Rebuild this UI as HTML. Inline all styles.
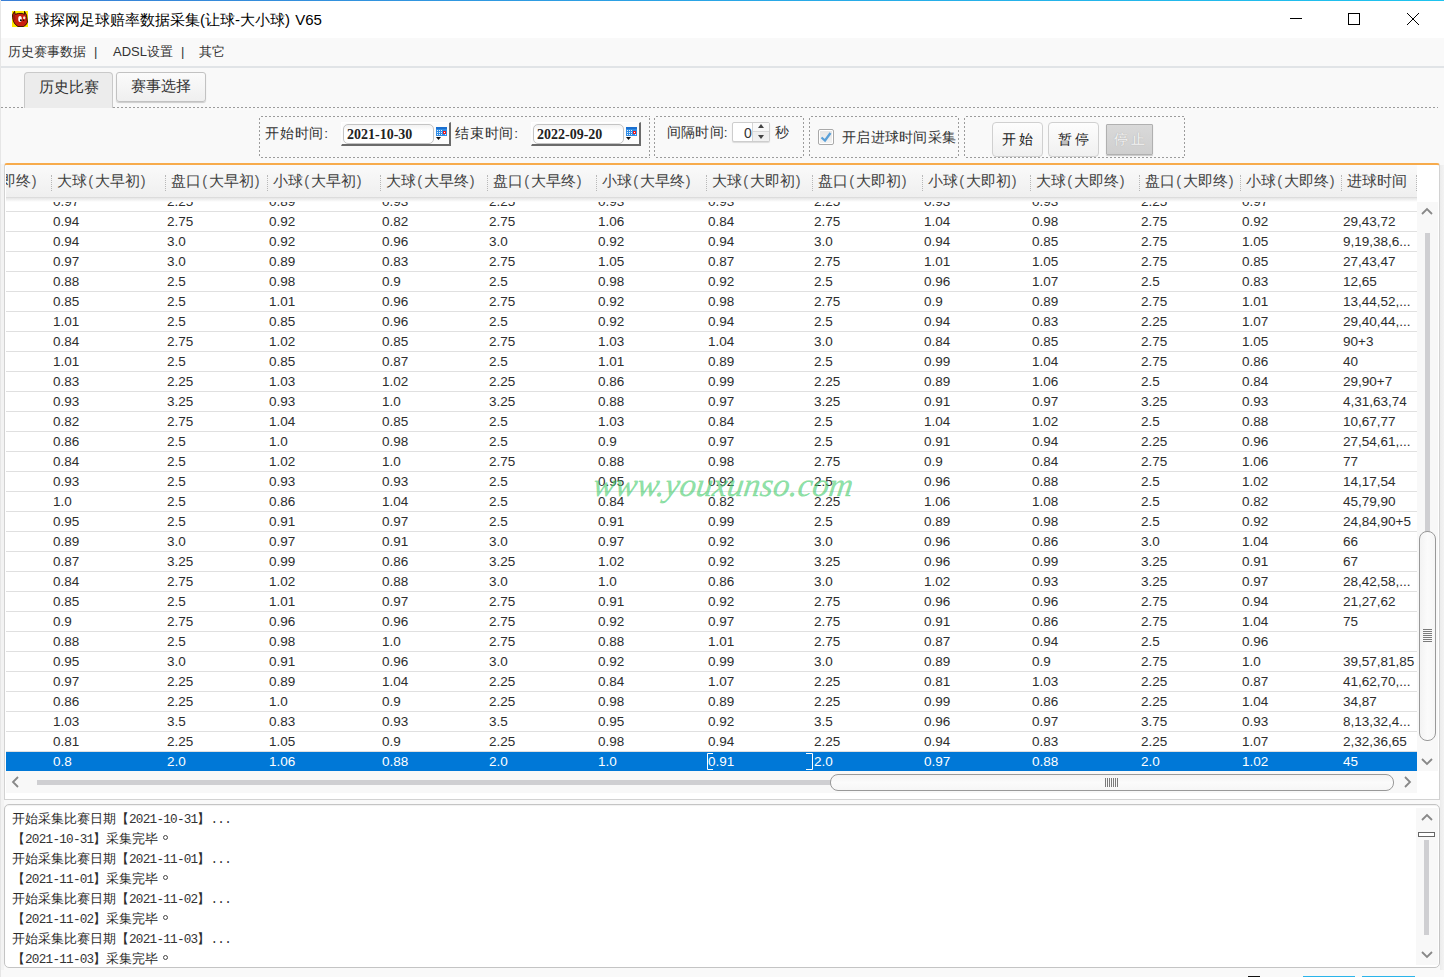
<!DOCTYPE html>
<html><head><meta charset="utf-8">
<style>
*{box-sizing:border-box;}
html,body{margin:0;padding:0;}
body{width:1444px;height:977px;overflow:hidden;position:relative;background:#f9f9f9;font-family:"Liberation Sans",sans-serif;color:#333;}
.abs{position:absolute;}
#topline{left:0;top:0;width:1444px;height:1px;background:linear-gradient(90deg,#3a7fd6,#2aa6e6 50%,#1ec3ee);}
#leftb{left:0;top:0;width:1px;height:977px;background:#e6e6e6;}
#title{left:1px;top:1px;width:1443px;height:37px;background:#fff;}
#title .t{position:absolute;left:34px;top:9px;font-size:15px;line-height:20px;color:#000;white-space:nowrap;word-spacing:1px;}
#menu{left:1px;top:38px;width:1443px;height:30px;background:#f9f9f9;border-bottom:2px solid #e1e4e7;}
#menu span{position:absolute;top:5px;font-size:13px;line-height:18px;color:#333;white-space:nowrap;}
.tab{position:absolute;font-size:15px;line-height:20px;color:#333;text-align:center;}
#tab1{left:24px;top:72px;width:89px;height:36px;background:#ececec;border:1px solid #c9c9c9;border-bottom:none;border-radius:4px 4px 0 0;padding-top:4px;z-index:2;}
#tab2{left:116px;top:72px;width:90px;height:30px;background:linear-gradient(#fbfbfb,#efefef);border:1px solid #c2c2c2;border-radius:3px;padding-top:3px;box-shadow:0 1px 1px rgba(0,0,0,.18);}
#dash1{left:1px;top:107px;width:1437px;height:1px;background:repeating-linear-gradient(90deg,#9c9c9c 0 2px,transparent 2px 4px);}
.grp{position:absolute;background:linear-gradient(90deg,#9c9c9c 50%,transparent 50%) 2px 0/4px 1px repeat-x,linear-gradient(90deg,#9c9c9c 50%,transparent 50%) 2px 100%/4px 1px repeat-x,linear-gradient(#9c9c9c 50%,transparent 50%) 0 2px/1px 4px repeat-y,linear-gradient(#9c9c9c 50%,transparent 50%) 100% 2px/1px 4px repeat-y;}
.lbl{position:absolute;font-size:13.5px;line-height:18px;color:#333;white-space:nowrap;letter-spacing:0.8px;}
.datebox{position:absolute;width:110px;height:23px;background:#fcfcfc;border-top:1px solid #fff;border-left:1px solid #fff;border-right:2px solid #6b6b6b;border-bottom:2px solid #6b6b6b;}
.datebox .f{position:absolute;left:1px;top:1px;width:91px;height:20px;background:linear-gradient(#f2f2f2,#fff 30%);border:1px solid #c4c4c4;border-radius:5px;font-family:"Liberation Serif",serif;font-weight:bold;font-size:14px;line-height:19px;padding-left:3px;color:#222;}
.cal{position:absolute;left:94px;top:4px;}
.btn{position:absolute;height:35px;border:1px solid #d0d0d0;border-radius:4px;background:linear-gradient(#fdfdfd,#f0f0f0);font-size:13.5px;line-height:33px;text-align:center;color:#222;letter-spacing:3.5px;padding-left:3.5px;}
#grid{left:4px;top:163px;width:1436px;height:637px;background:#fff;border:1px solid #d2d2d2;border-top:2px solid #f7ab4c;border-radius:3px 3px 0 0;overflow:hidden;}
#gin{position:absolute;left:1px;top:0px;width:1411px;height:606px;overflow:hidden;}
.row{position:absolute;left:0;width:1411px;height:20px;border-bottom:1px solid #e0e0e0;font-size:13.5px;line-height:20px;color:#2e2e2e;}
.row span{position:absolute;top:0;white-space:nowrap;}
.row.sel{background:#0078d7;color:#fff;border-bottom:none;height:19px;line-height:19px;}
#hdr{position:absolute;left:0;top:0;width:1411px;height:33px;background:linear-gradient(#fafafa,#efefef);border-bottom:1px solid #dcdcdc;}
#hsh{position:absolute;left:0;top:33px;width:1411px;height:4px;background:linear-gradient(#e6e6e6,#fff);}
#hdr .h{position:absolute;top:7px;font-size:14.5px;line-height:18px;color:#404040;white-space:nowrap;}
#hdr .h i{display:inline-block;width:7.5px;text-align:center;font-style:normal;color:#555;}
#hdr .sep{position:absolute;top:10px;width:1px;height:16px;border-left:1px dotted #b8b8b8;}
#vs{position:absolute;left:1412px;top:37px;width:21px;height:569px;background:#f8f8f8;}
.chev{position:absolute;}
#hs{position:absolute;left:1px;top:606px;width:1411px;height:22px;background:#f8f8f8;}
#log{left:4px;top:804px;width:1436px;height:164px;background:#fff;border:1px solid #c4c4c4;border-radius:5px;box-shadow:inset 0 1px 1px rgba(0,0,0,.06);}
#logt{position:absolute;left:7px;top:4px;font-size:12.8px;line-height:20px;color:#2a2a2a;}
#logt div{white-space:nowrap;height:20px;}
#logt .o{display:inline-block;width:13px;height:9px;position:relative;}
#logt .o:after{content:"";position:absolute;left:5px;top:1px;width:5px;height:5px;box-sizing:border-box;border:1px solid #444;border-radius:50%;}
#logt b{font-weight:normal;color:#333;font-family:"Liberation Mono",monospace;font-size:12.7px;letter-spacing:-0.77px;}
#wm{left:591px;top:467px;font-family:"Liberation Serif",serif;font-style:italic;font-size:33px;-webkit-text-stroke:0.3px rgba(70,205,110,.6);transform:skewX(-8deg);transform-origin:0 100%;line-height:36px;color:rgba(70,205,110,.62);white-space:nowrap;}
</style></head><body>
<div id="topline" class="abs"></div>
<div id="title" class="abs">
  <svg style="position:absolute;left:11px;top:10px" width="16" height="16" viewBox="0 0 16 16">
    <rect x="0" y="0" width="16" height="16" fill="#ffe800"/>
    <path d="M0.6 3.5 L2.6 0.3 L3.2 3.3 Q6.5 2 10.2 2.4 L12.4 3.4 L12.5 0.3 L14.6 4.2 L15.5 11.2 Q14.2 14.4 11.4 15.6 L6 15.6 Q2.6 13.6 1.5 10.5 L0.6 6.5 Z" fill="#c8200f" stroke="#220500" stroke-width="0.9"/>
    <path d="M1 3.8 L3 3.5 L3.5 9 L1.4 9.5 Z" fill="#9a1a0c"/>
    <ellipse cx="8" cy="8" rx="1.8" ry="2.9" fill="#fff"/>
    <circle cx="8.9" cy="9.3" r="1" fill="#000"/>
    <ellipse cx="12.2" cy="6.8" rx="1.2" ry="1.5" fill="#f6e2cc"/>
    <circle cx="11.6" cy="9.3" r="0.8" fill="#3a0800"/>
  </svg>
  <div class="t">球探网足球赔率数据采集(让球-大小球) V65</div>
  <svg style="position:absolute;left:1288px;top:12px" width="134" height="16" viewBox="0 0 134 16">
    <path d="M1 5.5 H13" stroke="#000" stroke-width="1"/>
    <rect x="59.5" y="0.5" width="11" height="11" fill="none" stroke="#000" stroke-width="1"/>
    <path d="M118 0 L130 12 M130 0 L118 12" stroke="#000" stroke-width="1"/>
  </svg>
</div>
<div id="leftb" class="abs"></div>
<div id="menu" class="abs">
  <span style="left:7px">历史赛事数据</span>
  <span style="left:93px">|</span>
  <span style="left:112px">ADSL设置</span>
  <span style="left:180px">|</span>
  <span style="left:198px">其它</span>
</div>
<div class="tab" id="tab1">历史比赛</div>
<div class="tab" id="tab2">赛事选择</div>
<div id="dash1" class="abs"></div>

<div class="grp" style="left:259px;top:116px;width:391px;height:42px;"></div>
<div class="lbl" style="left:265px;top:125px">开始时间:</div>
<div class="datebox" style="left:341px;top:122px;height:24px"><div class="f">2021-10-30</div><svg class="cal" width="12" height="14" viewBox="0 0 12 14"><rect x="0" y="0" width="11" height="9" fill="#2f8ce6"/><rect x="0" y="0" width="11" height="2" fill="#1a6fd0"/><g fill="#e8f2ff"><rect x="1" y="3" width="1" height="1"/><rect x="3" y="3" width="1" height="1"/><rect x="5" y="3" width="1" height="1"/><rect x="1" y="5" width="1" height="1"/><rect x="3" y="5" width="1" height="1"/><rect x="5" y="5" width="1" height="1"/><rect x="1" y="7" width="1" height="1"/><rect x="3" y="7" width="1" height="1"/><rect x="5" y="7" width="1" height="1"/><rect x="9" y="7" width="1" height="1"/></g><rect x="7" y="4" width="3" height="3" fill="#f01818"/><rect x="8" y="5" width="1" height="1" fill="#fff"/><path d="M0 10 H5 L2.5 13 Z" fill="#111"/></svg></div>
<div class="lbl" style="left:455px;top:125px">结束时间:</div>
<div class="datebox" style="left:531px;top:122px;height:24px"><div class="f">2022-09-20</div><svg class="cal" width="12" height="14" viewBox="0 0 12 14"><rect x="0" y="0" width="11" height="9" fill="#2f8ce6"/><rect x="0" y="0" width="11" height="2" fill="#1a6fd0"/><g fill="#e8f2ff"><rect x="1" y="3" width="1" height="1"/><rect x="3" y="3" width="1" height="1"/><rect x="5" y="3" width="1" height="1"/><rect x="1" y="5" width="1" height="1"/><rect x="3" y="5" width="1" height="1"/><rect x="5" y="5" width="1" height="1"/><rect x="1" y="7" width="1" height="1"/><rect x="3" y="7" width="1" height="1"/><rect x="5" y="7" width="1" height="1"/><rect x="9" y="7" width="1" height="1"/></g><rect x="7" y="4" width="3" height="3" fill="#f01818"/><rect x="8" y="5" width="1" height="1" fill="#fff"/><path d="M0 10 H5 L2.5 13 Z" fill="#111"/></svg></div>

<div class="grp" style="left:654px;top:116px;width:150px;height:42px;"></div>
<div class="lbl" style="left:667px;top:124px;letter-spacing:0.2px">间隔时间:</div>
<div class="abs" style="left:732px;top:122px;width:38px;height:20px;background:#fff;border:1px solid #cdcdcd;border-radius:2px;box-shadow:0 1px 1px rgba(0,0,0,.12);">
  <div style="position:absolute;left:11px;top:1px;font-size:14px;line-height:18px;color:#333">0</div>
  <div style="position:absolute;left:19px;top:0;width:17px;height:18px;border-left:1px solid #d4d4d4;background:linear-gradient(#fbfbfb,#f7f7f7 45%,#eeeeee 55%,#f2f2f2)"></div>
  <div style="position:absolute;left:20px;top:8px;width:16px;height:1px;background:#d8d8d8"></div>
  <div style="position:absolute;left:25px;top:1px;border-left:3px solid transparent;border-right:3px solid transparent;border-bottom:4px solid #444"></div>
  <div style="position:absolute;left:25px;top:12px;border-left:3px solid transparent;border-right:3px solid transparent;border-top:4px solid #444"></div>
</div>
<div class="lbl" style="left:775px;top:124px">秒</div>

<div class="grp" style="left:809px;top:116px;width:150px;height:42px;"></div>
<div class="abs" style="left:818px;top:129px;width:16px;height:16px;background:#fff;border:1px solid #a9a9a9;border-radius:2px;"><div style="position:absolute;left:1px;top:1px;width:12px;height:12px;background:linear-gradient(#e6e6e6,#f3f3f3)"></div>
  <svg width="14" height="14" viewBox="0 0 14 14" style="position:absolute;left:0;top:0"><path d="M2.5 7.5 L6 10.5 L11.5 3" fill="none" stroke="#5aa0d8" stroke-width="2.3"/></svg>
</div>
<div class="lbl" style="left:842px;top:129px;letter-spacing:0.3px">开启进球时间采集</div>

<div class="grp" style="left:964px;top:116px;width:221px;height:42px;"></div>
<div class="btn" style="left:992px;top:122px;width:51px;">开始</div>
<div class="btn" style="left:1048px;top:122px;width:51px;">暂停</div>
<div class="btn" style="left:1106px;top:124px;width:47px;height:31px;line-height:29px;background:linear-gradient(#d9d9d9,#cfcfcf);border-color:#b0b0b0;border-radius:1px;color:#f6f6f6;text-shadow:0 0 1px rgba(120,120,120,.6);box-shadow:0 1px 1px rgba(0,0,0,.2)">停止</div>

<div id="grid" class="abs">
  <div id="gin">
<div class="row" style="top:27px"><span style="left:47px">0.97</span><span style="left:161px">2.25</span><span style="left:263px">0.89</span><span style="left:376px">0.93</span><span style="left:483px">2.25</span><span style="left:592px">0.93</span><span style="left:702px">0.93</span><span style="left:808px">2.25</span><span style="left:918px">0.93</span><span style="left:1026px">0.93</span><span style="left:1135px">2.25</span><span style="left:1236px">0.97</span></div>
<div class="row" style="top:47px"><span style="left:47px">0.94</span><span style="left:161px">2.75</span><span style="left:263px">0.92</span><span style="left:376px">0.82</span><span style="left:483px">2.75</span><span style="left:592px">1.06</span><span style="left:702px">0.84</span><span style="left:808px">2.75</span><span style="left:918px">1.04</span><span style="left:1026px">0.98</span><span style="left:1135px">2.75</span><span style="left:1236px">0.92</span><span style="left:1337px">29,43,72</span></div>
<div class="row" style="top:67px"><span style="left:47px">0.94</span><span style="left:161px">3.0</span><span style="left:263px">0.92</span><span style="left:376px">0.96</span><span style="left:483px">3.0</span><span style="left:592px">0.92</span><span style="left:702px">0.94</span><span style="left:808px">3.0</span><span style="left:918px">0.94</span><span style="left:1026px">0.85</span><span style="left:1135px">2.75</span><span style="left:1236px">1.05</span><span style="left:1337px">9,19,38,6...</span></div>
<div class="row" style="top:87px"><span style="left:47px">0.97</span><span style="left:161px">3.0</span><span style="left:263px">0.89</span><span style="left:376px">0.83</span><span style="left:483px">2.75</span><span style="left:592px">1.05</span><span style="left:702px">0.87</span><span style="left:808px">2.75</span><span style="left:918px">1.01</span><span style="left:1026px">1.05</span><span style="left:1135px">2.75</span><span style="left:1236px">0.85</span><span style="left:1337px">27,43,47</span></div>
<div class="row" style="top:107px"><span style="left:47px">0.88</span><span style="left:161px">2.5</span><span style="left:263px">0.98</span><span style="left:376px">0.9</span><span style="left:483px">2.5</span><span style="left:592px">0.98</span><span style="left:702px">0.92</span><span style="left:808px">2.5</span><span style="left:918px">0.96</span><span style="left:1026px">1.07</span><span style="left:1135px">2.5</span><span style="left:1236px">0.83</span><span style="left:1337px">12,65</span></div>
<div class="row" style="top:127px"><span style="left:47px">0.85</span><span style="left:161px">2.5</span><span style="left:263px">1.01</span><span style="left:376px">0.96</span><span style="left:483px">2.75</span><span style="left:592px">0.92</span><span style="left:702px">0.98</span><span style="left:808px">2.75</span><span style="left:918px">0.9</span><span style="left:1026px">0.89</span><span style="left:1135px">2.75</span><span style="left:1236px">1.01</span><span style="left:1337px">13,44,52,...</span></div>
<div class="row" style="top:147px"><span style="left:47px">1.01</span><span style="left:161px">2.5</span><span style="left:263px">0.85</span><span style="left:376px">0.96</span><span style="left:483px">2.5</span><span style="left:592px">0.92</span><span style="left:702px">0.94</span><span style="left:808px">2.5</span><span style="left:918px">0.94</span><span style="left:1026px">0.83</span><span style="left:1135px">2.25</span><span style="left:1236px">1.07</span><span style="left:1337px">29,40,44,...</span></div>
<div class="row" style="top:167px"><span style="left:47px">0.84</span><span style="left:161px">2.75</span><span style="left:263px">1.02</span><span style="left:376px">0.85</span><span style="left:483px">2.75</span><span style="left:592px">1.03</span><span style="left:702px">1.04</span><span style="left:808px">3.0</span><span style="left:918px">0.84</span><span style="left:1026px">0.85</span><span style="left:1135px">2.75</span><span style="left:1236px">1.05</span><span style="left:1337px">90+3</span></div>
<div class="row" style="top:187px"><span style="left:47px">1.01</span><span style="left:161px">2.5</span><span style="left:263px">0.85</span><span style="left:376px">0.87</span><span style="left:483px">2.5</span><span style="left:592px">1.01</span><span style="left:702px">0.89</span><span style="left:808px">2.5</span><span style="left:918px">0.99</span><span style="left:1026px">1.04</span><span style="left:1135px">2.75</span><span style="left:1236px">0.86</span><span style="left:1337px">40</span></div>
<div class="row" style="top:207px"><span style="left:47px">0.83</span><span style="left:161px">2.25</span><span style="left:263px">1.03</span><span style="left:376px">1.02</span><span style="left:483px">2.25</span><span style="left:592px">0.86</span><span style="left:702px">0.99</span><span style="left:808px">2.25</span><span style="left:918px">0.89</span><span style="left:1026px">1.06</span><span style="left:1135px">2.5</span><span style="left:1236px">0.84</span><span style="left:1337px">29,90+7</span></div>
<div class="row" style="top:227px"><span style="left:47px">0.93</span><span style="left:161px">3.25</span><span style="left:263px">0.93</span><span style="left:376px">1.0</span><span style="left:483px">3.25</span><span style="left:592px">0.88</span><span style="left:702px">0.97</span><span style="left:808px">3.25</span><span style="left:918px">0.91</span><span style="left:1026px">0.97</span><span style="left:1135px">3.25</span><span style="left:1236px">0.93</span><span style="left:1337px">4,31,63,74</span></div>
<div class="row" style="top:247px"><span style="left:47px">0.82</span><span style="left:161px">2.75</span><span style="left:263px">1.04</span><span style="left:376px">0.85</span><span style="left:483px">2.5</span><span style="left:592px">1.03</span><span style="left:702px">0.84</span><span style="left:808px">2.5</span><span style="left:918px">1.04</span><span style="left:1026px">1.02</span><span style="left:1135px">2.5</span><span style="left:1236px">0.88</span><span style="left:1337px">10,67,77</span></div>
<div class="row" style="top:267px"><span style="left:47px">0.86</span><span style="left:161px">2.5</span><span style="left:263px">1.0</span><span style="left:376px">0.98</span><span style="left:483px">2.5</span><span style="left:592px">0.9</span><span style="left:702px">0.97</span><span style="left:808px">2.5</span><span style="left:918px">0.91</span><span style="left:1026px">0.94</span><span style="left:1135px">2.25</span><span style="left:1236px">0.96</span><span style="left:1337px">27,54,61,...</span></div>
<div class="row" style="top:287px"><span style="left:47px">0.84</span><span style="left:161px">2.5</span><span style="left:263px">1.02</span><span style="left:376px">1.0</span><span style="left:483px">2.75</span><span style="left:592px">0.88</span><span style="left:702px">0.98</span><span style="left:808px">2.75</span><span style="left:918px">0.9</span><span style="left:1026px">0.84</span><span style="left:1135px">2.75</span><span style="left:1236px">1.06</span><span style="left:1337px">77</span></div>
<div class="row" style="top:307px"><span style="left:47px">0.93</span><span style="left:161px">2.5</span><span style="left:263px">0.93</span><span style="left:376px">0.93</span><span style="left:483px">2.5</span><span style="left:592px">0.95</span><span style="left:702px">0.92</span><span style="left:808px">2.5</span><span style="left:918px">0.96</span><span style="left:1026px">0.88</span><span style="left:1135px">2.5</span><span style="left:1236px">1.02</span><span style="left:1337px">14,17,54</span></div>
<div class="row" style="top:327px"><span style="left:47px">1.0</span><span style="left:161px">2.5</span><span style="left:263px">0.86</span><span style="left:376px">1.04</span><span style="left:483px">2.5</span><span style="left:592px">0.84</span><span style="left:702px">0.82</span><span style="left:808px">2.25</span><span style="left:918px">1.06</span><span style="left:1026px">1.08</span><span style="left:1135px">2.5</span><span style="left:1236px">0.82</span><span style="left:1337px">45,79,90</span></div>
<div class="row" style="top:347px"><span style="left:47px">0.95</span><span style="left:161px">2.5</span><span style="left:263px">0.91</span><span style="left:376px">0.97</span><span style="left:483px">2.5</span><span style="left:592px">0.91</span><span style="left:702px">0.99</span><span style="left:808px">2.5</span><span style="left:918px">0.89</span><span style="left:1026px">0.98</span><span style="left:1135px">2.5</span><span style="left:1236px">0.92</span><span style="left:1337px">24,84,90+5</span></div>
<div class="row" style="top:367px"><span style="left:47px">0.89</span><span style="left:161px">3.0</span><span style="left:263px">0.97</span><span style="left:376px">0.91</span><span style="left:483px">3.0</span><span style="left:592px">0.97</span><span style="left:702px">0.92</span><span style="left:808px">3.0</span><span style="left:918px">0.96</span><span style="left:1026px">0.86</span><span style="left:1135px">3.0</span><span style="left:1236px">1.04</span><span style="left:1337px">66</span></div>
<div class="row" style="top:387px"><span style="left:47px">0.87</span><span style="left:161px">3.25</span><span style="left:263px">0.99</span><span style="left:376px">0.86</span><span style="left:483px">3.25</span><span style="left:592px">1.02</span><span style="left:702px">0.92</span><span style="left:808px">3.25</span><span style="left:918px">0.96</span><span style="left:1026px">0.99</span><span style="left:1135px">3.25</span><span style="left:1236px">0.91</span><span style="left:1337px">67</span></div>
<div class="row" style="top:407px"><span style="left:47px">0.84</span><span style="left:161px">2.75</span><span style="left:263px">1.02</span><span style="left:376px">0.88</span><span style="left:483px">3.0</span><span style="left:592px">1.0</span><span style="left:702px">0.86</span><span style="left:808px">3.0</span><span style="left:918px">1.02</span><span style="left:1026px">0.93</span><span style="left:1135px">3.25</span><span style="left:1236px">0.97</span><span style="left:1337px">28,42,58,...</span></div>
<div class="row" style="top:427px"><span style="left:47px">0.85</span><span style="left:161px">2.5</span><span style="left:263px">1.01</span><span style="left:376px">0.97</span><span style="left:483px">2.75</span><span style="left:592px">0.91</span><span style="left:702px">0.92</span><span style="left:808px">2.75</span><span style="left:918px">0.96</span><span style="left:1026px">0.96</span><span style="left:1135px">2.75</span><span style="left:1236px">0.94</span><span style="left:1337px">21,27,62</span></div>
<div class="row" style="top:447px"><span style="left:47px">0.9</span><span style="left:161px">2.75</span><span style="left:263px">0.96</span><span style="left:376px">0.96</span><span style="left:483px">2.75</span><span style="left:592px">0.92</span><span style="left:702px">0.97</span><span style="left:808px">2.75</span><span style="left:918px">0.91</span><span style="left:1026px">0.86</span><span style="left:1135px">2.75</span><span style="left:1236px">1.04</span><span style="left:1337px">75</span></div>
<div class="row" style="top:467px"><span style="left:47px">0.88</span><span style="left:161px">2.5</span><span style="left:263px">0.98</span><span style="left:376px">1.0</span><span style="left:483px">2.75</span><span style="left:592px">0.88</span><span style="left:702px">1.01</span><span style="left:808px">2.75</span><span style="left:918px">0.87</span><span style="left:1026px">0.94</span><span style="left:1135px">2.5</span><span style="left:1236px">0.96</span></div>
<div class="row" style="top:487px"><span style="left:47px">0.95</span><span style="left:161px">3.0</span><span style="left:263px">0.91</span><span style="left:376px">0.96</span><span style="left:483px">3.0</span><span style="left:592px">0.92</span><span style="left:702px">0.99</span><span style="left:808px">3.0</span><span style="left:918px">0.89</span><span style="left:1026px">0.9</span><span style="left:1135px">2.75</span><span style="left:1236px">1.0</span><span style="left:1337px">39,57,81,85</span></div>
<div class="row" style="top:507px"><span style="left:47px">0.97</span><span style="left:161px">2.25</span><span style="left:263px">0.89</span><span style="left:376px">1.04</span><span style="left:483px">2.25</span><span style="left:592px">0.84</span><span style="left:702px">1.07</span><span style="left:808px">2.25</span><span style="left:918px">0.81</span><span style="left:1026px">1.03</span><span style="left:1135px">2.25</span><span style="left:1236px">0.87</span><span style="left:1337px">41,62,70,...</span></div>
<div class="row" style="top:527px"><span style="left:47px">0.86</span><span style="left:161px">2.25</span><span style="left:263px">1.0</span><span style="left:376px">0.9</span><span style="left:483px">2.25</span><span style="left:592px">0.98</span><span style="left:702px">0.89</span><span style="left:808px">2.25</span><span style="left:918px">0.99</span><span style="left:1026px">0.86</span><span style="left:1135px">2.25</span><span style="left:1236px">1.04</span><span style="left:1337px">34,87</span></div>
<div class="row" style="top:547px"><span style="left:47px">1.03</span><span style="left:161px">3.5</span><span style="left:263px">0.83</span><span style="left:376px">0.93</span><span style="left:483px">3.5</span><span style="left:592px">0.95</span><span style="left:702px">0.92</span><span style="left:808px">3.5</span><span style="left:918px">0.96</span><span style="left:1026px">0.97</span><span style="left:1135px">3.75</span><span style="left:1236px">0.93</span><span style="left:1337px">8,13,32,4...</span></div>
<div class="row" style="top:567px"><span style="left:47px">0.81</span><span style="left:161px">2.25</span><span style="left:263px">1.05</span><span style="left:376px">0.9</span><span style="left:483px">2.25</span><span style="left:592px">0.98</span><span style="left:702px">0.94</span><span style="left:808px">2.25</span><span style="left:918px">0.94</span><span style="left:1026px">0.83</span><span style="left:1135px">2.25</span><span style="left:1236px">1.07</span><span style="left:1337px">2,32,36,65</span></div>
<div class="row sel" style="top:587px"><span style="left:47px">0.8</span><span style="left:161px">2.0</span><span style="left:263px">1.06</span><span style="left:376px">0.88</span><span style="left:483px">2.0</span><span style="left:592px">1.0</span><span style="left:702px">0.91</span><span style="left:808px">2.0</span><span style="left:918px">0.97</span><span style="left:1026px">0.88</span><span style="left:1135px">2.0</span><span style="left:1236px">1.02</span><span style="left:1337px">45</span><svg style="position:absolute;left:701px;top:0" width="107" height="20"><path d="M6 1.5 H0.5 V17.5 H6 M99 1.5 H105.5 V17.5 H99" fill="none" stroke="#fff" stroke-width="1"/></svg></div>
    <div id="hdr"><span class="h" style="left:-58px">小球<i>(</i>大即终<i>)</i></span><span class="h" style="left:51px">大球<i>(</i>大早初<i>)</i></span><span class="h" style="left:165px">盘口<i>(</i>大早初<i>)</i></span><span class="h" style="left:267px">小球<i>(</i>大早初<i>)</i></span><span class="h" style="left:380px">大球<i>(</i>大早终<i>)</i></span><span class="h" style="left:487px">盘口<i>(</i>大早终<i>)</i></span><span class="h" style="left:596px">小球<i>(</i>大早终<i>)</i></span><span class="h" style="left:706px">大球<i>(</i>大即初<i>)</i></span><span class="h" style="left:812px">盘口<i>(</i>大即初<i>)</i></span><span class="h" style="left:922px">小球<i>(</i>大即初<i>)</i></span><span class="h" style="left:1030px">大球<i>(</i>大即终<i>)</i></span><span class="h" style="left:1139px">盘口<i>(</i>大即终<i>)</i></span><span class="h" style="left:1240px">小球<i>(</i>大即终<i>)</i></span><span class="h" style="left:1341px">进球时间</span><i class="sep" style="left:45px"></i><i class="sep" style="left:159px"></i><i class="sep" style="left:261px"></i><i class="sep" style="left:374px"></i><i class="sep" style="left:481px"></i><i class="sep" style="left:590px"></i><i class="sep" style="left:700px"></i><i class="sep" style="left:806px"></i><i class="sep" style="left:916px"></i><i class="sep" style="left:1024px"></i><i class="sep" style="left:1133px"></i><i class="sep" style="left:1234px"></i><i class="sep" style="left:1335px"></i><i class="sep" style="left:1410px"></i></div><div id="hsh"></div>
  </div>
  <div id="vs">
    <svg class="chev" style="left:4px;top:5px" width="12" height="8" viewBox="0 0 12 8"><path d="M1 7 L6 2 L11 7" fill="none" stroke="#888" stroke-width="1.8"/></svg>
    <div style="position:absolute;left:8px;top:31px;width:5px;height:505px;background:#cfcfd2;"></div>
    <div style="position:absolute;left:2px;top:329px;width:17px;height:210px;border:1px solid #999;border-radius:8px;background:linear-gradient(90deg,#f3f3f3,#fbfbfb 50%,#f6f6f6);"></div>
    <div style="position:absolute;left:6px;top:427px;width:9px;height:13px;background:repeating-linear-gradient(#7b7b7b 0 1px,transparent 1px 2px);"></div>
    <svg class="chev" style="left:4px;top:556px" width="12" height="8" viewBox="0 0 12 8"><path d="M1 1 L6 6 L11 1" fill="none" stroke="#888" stroke-width="1.8"/></svg>
  </div>
  <div id="hs">
    <svg class="chev" style="left:5px;top:5px" width="8" height="12" viewBox="0 0 8 12"><path d="M7 1 L2 6 L7 11" fill="none" stroke="#888" stroke-width="1.8"/></svg>
    <div style="position:absolute;left:31px;top:9px;width:800px;height:5px;background:#cfcfd2;"></div>
    <div style="position:absolute;left:824px;top:3px;width:564px;height:17px;border:1px solid #999;border-radius:8px;background:linear-gradient(#f3f3f3,#fbfbfb 50%,#f6f6f6);"></div>
    <div style="position:absolute;left:1099px;top:7px;width:13px;height:9px;background:repeating-linear-gradient(90deg,#7b7b7b 0 1px,transparent 1px 2px);"></div>
    <svg class="chev" style="left:1398px;top:5px" width="8" height="12" viewBox="0 0 8 12"><path d="M1 1 L6 6 L1 11" fill="none" stroke="#888" stroke-width="1.8"/></svg>
  </div>
</div>

<div id="log" class="abs">
  <div style="position:absolute;left:1411px;top:3px;width:22px;height:157px;background:#f8f8f8;">
    <svg class="chev" style="left:5px;top:5px" width="12" height="8" viewBox="0 0 12 8"><path d="M1 7 L6 2 L11 7" fill="none" stroke="#888" stroke-width="1.8"/></svg>
    <div style="position:absolute;left:2px;top:24px;width:17px;height:5px;border:1.5px solid #666;background:#fff;"></div>
    <div style="position:absolute;left:8px;top:32px;width:5px;height:95px;background:#cfcfd2;"></div>
    <svg class="chev" style="left:5px;top:143px" width="12" height="8" viewBox="0 0 12 8"><path d="M1 1 L6 6 L11 1" fill="none" stroke="#888" stroke-width="1.8"/></svg>
  </div>
  <div id="logt">
<div>开始采集比赛日期【<b>2021-10-31</b>】<b>...</b></div>
<div>【<b>2021-10-31</b>】采集完毕<i class="o"></i></div>
<div>开始采集比赛日期【<b>2021-11-01</b>】<b>...</b></div>
<div>【<b>2021-11-01</b>】采集完毕<i class="o"></i></div>
<div>开始采集比赛日期【<b>2021-11-02</b>】<b>...</b></div>
<div>【<b>2021-11-02</b>】采集完毕<i class="o"></i></div>
<div>开始采集比赛日期【<b>2021-11-03</b>】<b>...</b></div>
<div>【<b>2021-11-03</b>】采集完毕<i class="o"></i></div>
  </div>
</div>
<div class="abs" style="left:1248px;top:976px;width:12px;height:1px;background:#111"></div><div class="abs" style="left:1303px;top:976px;width:52px;height:1px;background:#2bb4ea"></div><div class="abs" style="left:1362px;top:976px;width:53px;height:1px;background:#2bb4ea"></div>
<div class="abs" style="left:1440px;top:165px;width:4px;height:805px;background:linear-gradient(90deg,#ececec,#f3f3f3)"></div>
<div class="abs" style="left:1px;top:164px;width:3px;height:806px;background:#f3f3f3"></div>
<div id="wm" class="abs">www.youxunso.com</div>
</body></html>
